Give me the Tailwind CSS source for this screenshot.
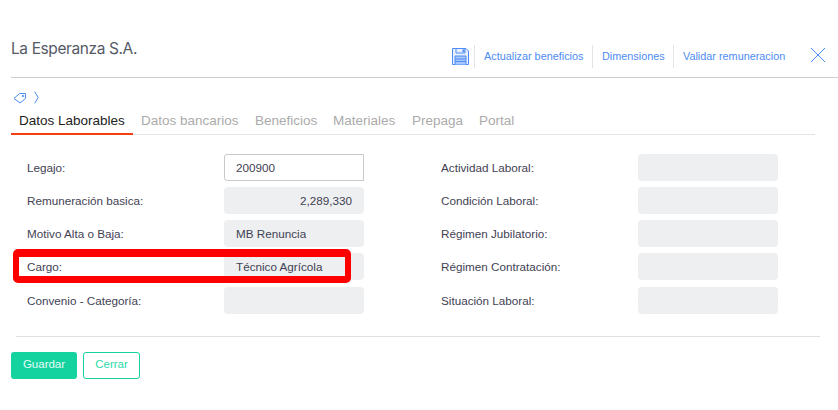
<!DOCTYPE html>
<html lang="es">

<head>
    <meta charset="UTF-8" />
    <meta name="viewport" content="width=device-width, initial-scale=1.0" />
    <title>La Esperanza S.A.</title>
    <script src="https://cdn.jsdelivr.net/npm/@tailwindcss/browser@4"></script>
</head>

<body class="bg-white h-[410px] w-[838px] overflow-hidden relative font-['Liberation_Sans',sans-serif] text-[#3f4254]">

    <!-- Header -->
    <div class="ml-[11px] h-[78px] border-b border-[#cfcfcf] flex items-start">
        <h2 class="mt-[38px] text-[15.5px] leading-[22px] text-[#565a67] font-['Inter',sans-serif] tracking-[-0.4px] font-normal">La Esperanza S.A.</h2>
        <div class="ml-auto mt-[45px] flex items-center text-[10.85px] text-[#4d8cf5]">
            <svg class="w-[17px] h-[19px] mr-[5px] shrink-0" viewBox="0 0 17 19" fill="none" stroke="#4d8cf5" stroke-width="1">
                <path d="M0.5 1.5h13.5l2.5 2.5v13.5H0.5z" fill="#e8f0fe" />
                <path d="M4 1.5v4.5h9V1.5" />
                <rect x="10.5" y="2.5" width="2" height="2.5" fill="#4d8cf5" stroke="none" />
                <path d="M3 17.5V9h11v8.5" fill="#a9c7fa" />
                <path d="M3 12h11M3 14.5h11" />
            </svg>
            <span class="h-[23px] w-[118px] flex items-center pl-[9px] border-l border-[#e4e4e4] whitespace-nowrap">Actualizar beneficios</span>
            <span class="h-[23px] w-[81px] flex items-center pl-[9px] border-l border-[#e4e4e4] whitespace-nowrap">Dimensiones</span>
            <span class="h-[23px] w-[112px] flex items-center pl-[9px] border-l border-[#e4e4e4] whitespace-nowrap">Validar remuneracion</span>
            <svg class="w-[16px] h-[16px] ml-[25px] mr-[12px] -mt-[3px] shrink-0" viewBox="0 0 16 16" fill="none" stroke="#4d8cf5" stroke-width="1">
                <path d="M1 1l14 14M15 1L1 15" />
            </svg>
        </div>
    </div>

    <!-- Breadcrumb -->
    <div class="ml-[13px] h-[24px] pt-[15px] flex items-center gap-[7px]">
        <svg class="w-[14px] h-[12px]" viewBox="0 0 14 12" fill="none" stroke="#4d8cf5" stroke-width="1">
            <path d="M1 6.5L6.5 1.5h6v5L7 11z" stroke-linejoin="round" />
            <circle cx="10" cy="4" r="0.8" />
        </svg>
        <svg class="w-[5px] h-[13px]" viewBox="0 0 5 13" fill="none" stroke="#4d8cf5" stroke-width="1">
            <path d="M0.7 0.7L4.2 6.5L0.7 12.3" />
        </svg>
    </div>

    <!-- Tabs -->
    <div class="ml-[11px] mr-[23px] mt-[7px] h-[26px] flex border-b border-[#e4e4e4] text-[13.5px] text-[#ababab] whitespace-nowrap leading-[23px]">
        <span class="h-[26px] px-[8px] w-[122px] text-[#222] border-b-2 border-[#f4400e]">Datos Laborables</span>
        <span class="pl-[8px] w-[122px]">Datos bancarios</span>
        <span class="w-[78px]">Beneficios</span>
        <span class="w-[79px]">Materiales</span>
        <span class="w-[67px]">Prepaga</span>
        <span>Portal</span>
    </div>

    <!-- Form -->
    <div class="ml-[27px] mt-[19px] grid grid-cols-[197px_217px_197px_140px] gap-y-[6.15px] text-[11.7px] text-[#3f4254] items-center">
        <label>Legajo:</label>
        <div class="h-[27px] w-[140px] border border-[#c9c9c9] rounded-l-[3px] pl-[11px] leading-[25px]">200900</div>
        <label class="col-start-3">Actividad Laboral:</label>
        <div class="h-[27px] bg-[#eeeff1] rounded-[4px]"></div>

        <label>Remuneración basica:</label>
        <div class="h-[27px] w-[140px] bg-[#eeeff1] rounded-[4px] pr-[12px] text-right leading-[27px]">2,289,330</div>
        <label class="col-start-3">Condición Laboral:</label>
        <div class="h-[27px] bg-[#eeeff1] rounded-[4px]"></div>

        <label>Motivo Alta o Baja:</label>
        <div class="h-[27px] w-[140px] bg-[#eeeff1] rounded-[4px] pl-[12px] leading-[27px]">MB Renuncia</div>
        <label class="col-start-3">Régimen Jubilatorio:</label>
        <div class="h-[27px] bg-[#eeeff1] rounded-[4px]"></div>

        <label>Cargo:</label>
        <div class="h-[27px] w-[140px] bg-[#eeeff1] rounded-[4px] pl-[12px] leading-[27px]">Técnico Agrícola</div>
        <label class="col-start-3">Régimen Contratación:</label>
        <div class="h-[27px] bg-[#eeeff1] rounded-[4px]"></div>

        <label class="pt-[2px]">Convenio - Categoría:</label>
        <div class="h-[27px] w-[140px] bg-[#eeeff1] rounded-[4px]"></div>
        <label class="col-start-3 pt-[2px]">Situación Laboral:</label>
        <div class="h-[27px] bg-[#eeeff1] rounded-[4px]"></div>
    </div>

    <div class="ml-[16px] mr-[18px] mt-[22px] border-t border-[#e0e0e0]"></div>

    <!-- Buttons -->
    <div class="ml-[11px] mt-[15px] flex gap-[6px] text-[11.5px]">
        <button class="w-[66px] h-[27px] pb-[1px] bg-[#14d39f] text-white/90 rounded-[3px]">Guardar</button>
        <button class="w-[57px] h-[27px] pb-[1px] border border-[#14d39f] text-[#2ed9aa] rounded-[3px]">Cerrar</button>
    </div>

    <!-- Red highlight -->
    <div class="absolute left-[13px] top-[249px] w-[338px] h-[34px] border-x-[6px] border-t-[8px] border-b-[7px] border-[#ff0000] rounded-[5px]"></div>

</body>

</html>
